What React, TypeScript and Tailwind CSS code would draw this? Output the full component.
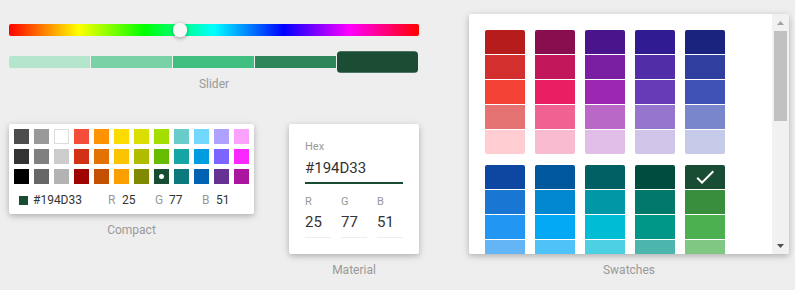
import React from "react";

const compactColors = [
  "#4D4D4D", "#999999", "#FFFFFF", "#F44E3B", "#FE9200", "#FCDC00", "#DBDF00", "#A4DD00", "#68CCCA", "#73D8FF", "#AEA1FF", "#FDA1FF",
  "#333333", "#808080", "#CCCCCC", "#D33115", "#E27300", "#FCC400", "#B0BC00", "#68BC00", "#16A5A5", "#009CE0", "#7B64FF", "#FA28FF",
  "#000000", "#666666", "#B3B3B3", "#9F0500", "#C45100", "#FB9E00", "#808900", "#194D33", "#0C797D", "#0062B1", "#653294", "#AB149E",
];

const swatchGroups = [
  ["#b71c1c", "#d32f2f", "#f44336", "#e57373", "#ffcdd2"],
  ["#880e4f", "#c2185b", "#e91e63", "#f06292", "#f8bbd0"],
  ["#4a148c", "#7b1fa2", "#9c27b0", "#ba68c8", "#e1bee7"],
  ["#311b92", "#512da8", "#673ab7", "#9575cd", "#d1c4e9"],
  ["#1a237e", "#303f9f", "#3f51b5", "#7986cb", "#c5cae9"],
  ["#0d47a1", "#1976d2", "#2196f3", "#64b5f6", "#bbdefb"],
  ["#01579b", "#0288d1", "#03a9f4", "#4fc3f7", "#b3e5fc"],
  ["#006064", "#0097a7", "#00bcd4", "#4dd0e1", "#b2ebf2"],
  ["#004d40", "#00796b", "#009688", "#4db6ac", "#b2dfdb"],
  ["#194D33", "#388e3c", "#4caf50", "#81c784", "#c8e6c9"],
  ["#33691e", "#689f38", "#8bc34a", "#aed581", "#dcedc8"],
  ["#827717", "#afb42b", "#cddc39", "#dce775", "#f0f4c3"],
  ["#f57f17", "#fbc02d", "#ffeb3b", "#fff176", "#fff9c4"],
  ["#ff6f00", "#ffa000", "#ffc107", "#ffd54f", "#ffecb3"],
  ["#e65100", "#f57c00", "#ff9800", "#ffb74d", "#ffe0b2"],
];

const sliderSwatches = ["#b3e6cc", "#79d2a6", "#40bf80", "#2d8659", "#1a4d33"];

const shadow = "shadow-[0_2px_10px_rgba(0,0,0,0.12),0_2px_5px_rgba(0,0,0,0.16)]";

function Label({ children }: { children: React.ReactNode }) {
  return <div className="mt-[8px] text-center text-[12px] leading-[16px] text-[#999999]">{children}</div>;
}

function Slider() {
  return (
    <div className="pt-[24px]">
      <div className="relative h-[12px] rounded-[2px] bg-[linear-gradient(to_right,#f00_0%,#ff0_17%,#0f0_33%,#0ff_50%,#00f_67%,#f0f_83%,#f00_100%)]">
        <div className="absolute left-[164px] top-[-1px] h-[14px] w-[14px] rounded-[6px] bg-[#f8f8f8] shadow-[0_1px_4px_0_rgba(0,0,0,0.37)]" />
      </div>
      <div className="mt-[20px] flex">
        {sliderSwatches.map((c, i) => (
          <div key={c} className="w-[82px] pr-[1px]">
            {i === 4 ? (
              <div className="h-[12px] scale-y-[1.8] rounded-[3.6px/2px]" style={{ background: c }} />
            ) : (
              <div className={"h-[12px] " + (i === 0 ? "rounded-l-[2px]" : "")} style={{ background: c }} />
            )}
          </div>
        ))}
      </div>
      <Label>Slider</Label>
    </div>
  );
}

function Compact() {
  return (
    <div className="flex flex-col">
      <div className={"w-[245px] rounded-[2px] bg-white pl-[5px] pt-[5px] pb-[6px] " + shadow}>
        <div className="grid grid-cols-[repeat(12,15px)] gap-[5px]">
          {compactColors.map((c) => (
            <div
              key={c}
              className={"flex h-[15px] w-[15px] items-center justify-center " + (c === "#FFFFFF" ? "shadow-[inset_0_0_0_1px_#dddddd]" : "")}
              style={{ background: c }}
            >
              {c === "#194D33" && <div className="h-[5px] w-[5px] rounded-full bg-white" />}
            </div>
          ))}
        </div>
        <div className="mt-[8px] flex h-[16px] items-center text-[12px] leading-[16px]">
          <div className="ml-[5px] h-[9px] w-[9px] bg-[#194D33]" />
          <div className="ml-[5px] w-[75px] text-[#333333]">#194D33</div>
          {[
            ["R", "25"],
            ["G", "77"],
            ["B", "51"],
          ].map(([l, v]) => (
            <div key={l} className="flex w-[47px]">
              <div className="w-[14px] text-[#999999]">{l}</div>
              <div className="text-[#333333]">{v}</div>
            </div>
          ))}
        </div>
      </div>
      <Label>Compact</Label>
    </div>
  );
}

function Material() {
  return (
    <div className="flex flex-col">
      <div className={"h-[130px] w-[130px] rounded-[2px] bg-white p-[16px] " + shadow}>
        <div className="relative pt-[12px]">
          <div className="absolute left-0 top-0 text-[11px] leading-[13px] text-[#999999]">Hex</div>
          <div className="flex h-[32px] items-center border-b-2 border-[#194D33] pt-[2px] text-[15px] text-[#333333]">
            #194D33
          </div>
        </div>
        <div className="mr-[-10px] flex pt-[11px]">
          {[
            ["R", "25"],
            ["G", "77"],
            ["B", "51"],
          ].map(([l, v]) => (
            <div key={l} className="relative flex-1 pr-[10px] pt-[12px]">
              <div className="absolute left-0 top-0 text-[11px] leading-[13px] text-[#999999]">{l}</div>
              <div className="flex h-[31px] items-center border-b border-[#eeeeee] pt-[1px] text-[15px] text-[#333333]">
                {v}
              </div>
            </div>
          ))}
        </div>
      </div>
      <Label>Material</Label>
    </div>
  );
}

function Swatches() {
  return (
    <div className="flex flex-col">
      <div className={"flex h-[240px] w-[320px] overflow-hidden rounded-[2px] bg-white " + shadow}>
        <div className="flex-1 overflow-hidden pl-[16px] pt-[16px]">
          <div className="flex flex-wrap">
            {swatchGroups.map((g, gi) => (
              <div key={gi} className="mr-[10px] w-[40px] pb-[10px]">
                {g.map((c, i) => (
                  <div
                    key={c}
                    className={
                      "mb-[1px] flex h-[24px] w-[40px] items-center justify-center " +
                      (i === 0 ? "rounded-t-[2px] " : "") +
                      (i === 4 ? "rounded-b-[2px]" : "")
                    }
                    style={{ background: c }}
                  >
                    {c === "#194D33" && (
                      <svg width="24" height="24" viewBox="0 0 24 24">
                        <path fill="#ffffff" d="M21,7L9,19L3.5,13.5L4.91,12.09L9,16.17L19.59,5.59L21,7Z" />
                      </svg>
                    )}
                  </div>
                ))}
              </div>
            ))}
          </div>
        </div>
        <div className="flex w-[17px] flex-col bg-[#f1f1f1]">
          <div className="flex h-[17px] items-center justify-center">
            <svg width="7" height="4" viewBox="0 0 7 4">
              <polygon points="3.5,0 7,4 0,4" fill="#a3a3a3" />
            </svg>
          </div>
          <div className="flex-1 px-[2px]">
            <div className="h-[90px] bg-[#c1c1c1]" />
          </div>
          <div className="flex h-[17px] items-center justify-center">
            <svg width="7" height="4" viewBox="0 0 7 4">
              <polygon points="0,0 7,0 3.5,4" fill="#505050" />
            </svg>
          </div>
        </div>
      </div>
      <Label>Swatches</Label>
    </div>
  );
}

export default function App() {
  return (
    <div className="flex h-[290px] w-[795px] overflow-hidden bg-[#eeeeee] font-['Roboto',sans-serif]">
      <div className="ml-[9px] flex w-[410px] flex-col">
        <Slider />
        <div className="mt-[32px] flex justify-between">
          <Compact />
          <Material />
        </div>
      </div>
      <div className="ml-[50px] pt-[14px]">
        <Swatches />
      </div>
    </div>
  );
}
